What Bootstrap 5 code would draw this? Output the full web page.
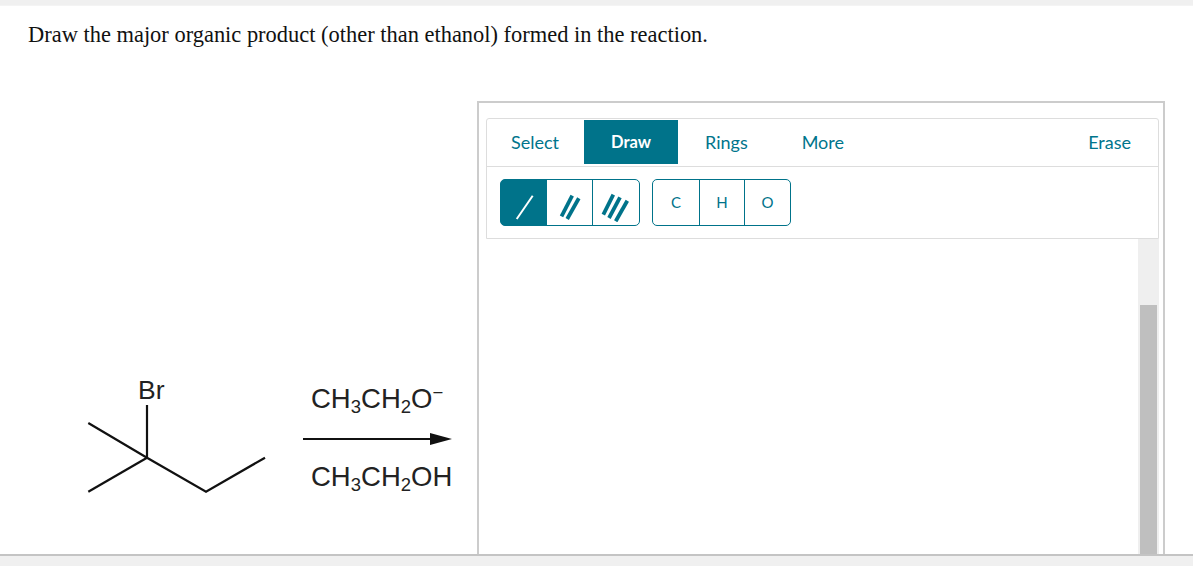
<!DOCTYPE html>
<html lang="en">
<head>
  <meta charset="UTF-8" />
  <meta name="viewport" content="width=device-width, initial-scale=1.0"/>
  <title>Draw the product</title>
  <link href="https://cdn.jsdelivr.net/npm/bootstrap@5.3.3/dist/css/bootstrap.min.css" rel="stylesheet" />
  <style>
    body {
      height: 566px;
      overflow: hidden;
      background-color: #f0f0f0;
      padding-top: 5px;
    }
    .question-panel {
      height: 551px;
      background-color: #fff;
      border-top: 1px solid #f4f4f4;
      border-bottom: 2px solid #c4c4c4;
      overflow: hidden;
    }
    .question-text {
      font-family: "Liberation Serif", serif;
      font-size: 22.45px;
      line-height: 28px;
      color: #111;
      margin: 0;
      padding: 15px 0 0 28px;
      height: 95px;
    }
    .reaction-pane {
      width: 477px;
    }
    .reaction-pane svg {
      display: block;
    }
    .reaction-pane text {
      font-family: "Liberation Sans", sans-serif;
      fill: #222;
    }
    .editor-box {
      width: 688px;
      height: 460px;
      border: 2px solid #ccc;
      border-bottom: 0;
      padding: 15px 4px 0 7px;
    }
    .editor-toolbar {
      height: 121px;
      border: 1px solid #ddd;
      border-radius: 3px 3px 0 0;
    }
    .tab-row {
      height: 48px;
      border-bottom: 1px solid #ddd;
      padding-top: 1px;
      font-family: "Lato", sans-serif;
    }
    .tab-row .nav-link {
      height: 44px;
      padding: 0 27px;
      font-size: 18px;
      line-height: 45px;
      color: #00758c;
      border-radius: 0;
    }
    .tab-row .nav-link.first-tab {
      padding: 0 25px 0 24px;
    }
    .tab-row .nav-link.active {
      background-color: #00738a;
      color: #fff;
      font-weight: 700;
      font-size: 16.5px;
    }
    .tool-row {
      gap: 12px;
      padding: 12px 0 0 13px;
    }
    .tool-row .btn {
      --bs-btn-border-color: #00738a;
      --bs-btn-color: #00738a;
      --bs-btn-padding-x: 0;
      --bs-btn-padding-y: 0;
      --bs-btn-border-radius: 5px;
      --bs-btn-active-bg: #00738a;
      --bs-btn-active-border-color: #00738a;
      --bs-btn-active-color: #fff;
      flex: 0 0 auto;
      width: 47px;
      height: 47px;
      font-family: "Lato", sans-serif;
      font-size: 15px;
    }
    .tool-row .bond-btn:last-child,
    .tool-row .atom-btn:first-child {
      width: 48px;
    }
    .tool-row .atom-btn:nth-child(2) {
      width: 46px;
    }
    .tool-row .btn svg {
      display: block;
      margin: 7px auto 0;
    }
    .tool-row .bond-btn line {
      stroke: #00738a;
      stroke-width: 3.8;
    }
    .tool-row .bond-btn.active line {
      stroke: #fff;
      stroke-width: 2;
    }
    .canvas-area {
      height: 317px;
    }
    .scroll-track {
      width: 21px;
      height: 100%;
      background-color: #efefef;
      padding: 66px 2px 0;
    }
    .scroll-thumb {
      height: 100%;
      background-color: #bfbfbf;
    }
  </style>
</head>
<body>
  <div class="question-panel">
    <p class="question-text">Draw the major organic product (other than ethanol) formed in the reaction.</p>

    <div class="d-flex">
      <!-- Reaction scheme -->
      <div class="reaction-pane">
        <svg width="477" height="460" viewBox="0 101 477 460">
          <g stroke="#111" stroke-width="2.2" fill="none">
            <polyline points="88.3,423 147,457.7 206,491.7 265,457.7" />
            <line x1="147" y1="405" x2="147" y2="457.7" />
            <line x1="88.3" y1="491.7" x2="147" y2="457.7" />
            <line x1="303" y1="439" x2="435" y2="439" />
          </g>
          <polygon points="430,433 452,439 430,445" fill="#111" />
          <text x="138" y="399" font-size="26.5">Br</text>
          <text x="311" y="408" font-size="27.5">CH<tspan font-size="18.5" dy="5">3</tspan><tspan dy="-5">CH</tspan><tspan font-size="18.5" dy="5">2</tspan><tspan dy="-5">O</tspan><tspan font-size="18.5" dy="-9">−</tspan></text>
          <text x="311" y="486" font-size="27.5">CH<tspan font-size="18.5" dy="5">3</tspan><tspan dy="-5">CH</tspan><tspan font-size="18.5" dy="5">2</tspan><tspan dy="-5">OH</tspan></text>
        </svg>
      </div>

      <!-- Drawing editor -->
      <div class="editor-box">
        <div class="editor-toolbar">
          <ul class="nav tab-row">
            <li class="nav-item"><a class="nav-link first-tab" href="#">Select</a></li>
            <li class="nav-item"><a class="nav-link active" href="#">Draw</a></li>
            <li class="nav-item"><a class="nav-link" href="#">Rings</a></li>
            <li class="nav-item"><a class="nav-link" href="#">More</a></li>
            <li class="nav-item ms-auto"><a class="nav-link" href="#">Erase</a></li>
          </ul>
          <div class="d-flex tool-row">
            <div class="btn-group">
              <button type="button" class="btn bond-btn active" aria-label="Single bond">
                <svg width="32" height="32" viewBox="0 0 32 32"><line x1="8.7" y1="29" x2="24.7" y2="5.7" /></svg>
              </button>
              <button type="button" class="btn bond-btn" aria-label="Double bond">
                <svg width="32" height="32" viewBox="0 0 32 32"><line x1="7.5" y1="26.3" x2="18.2" y2="5.7" /><line x1="13.2" y1="29" x2="24.8" y2="8.3" /></svg>
              </button>
              <button type="button" class="btn bond-btn" aria-label="Triple bond">
                <svg width="32" height="32" viewBox="0 0 32 32"><line x1="3.3" y1="24.7" x2="13.3" y2="4.7" /><line x1="9" y1="28" x2="20" y2="7.3" /><line x1="15.7" y1="31.3" x2="27.3" y2="10.7" /></svg>
              </button>
            </div>
            <div class="btn-group">
              <button type="button" class="btn atom-btn">C</button>
              <button type="button" class="btn atom-btn">H</button>
              <button type="button" class="btn atom-btn">O</button>
            </div>
          </div>
        </div>
        <div class="canvas-area d-flex justify-content-end">
          <div class="scroll-track"><div class="scroll-thumb"></div></div>
        </div>
      </div>
    </div>
  </div>

  <script src="https://cdn.jsdelivr.net/npm/bootstrap@5.3.3/dist/js/bootstrap.bundle.min.js"></script>
</body>
</html>
